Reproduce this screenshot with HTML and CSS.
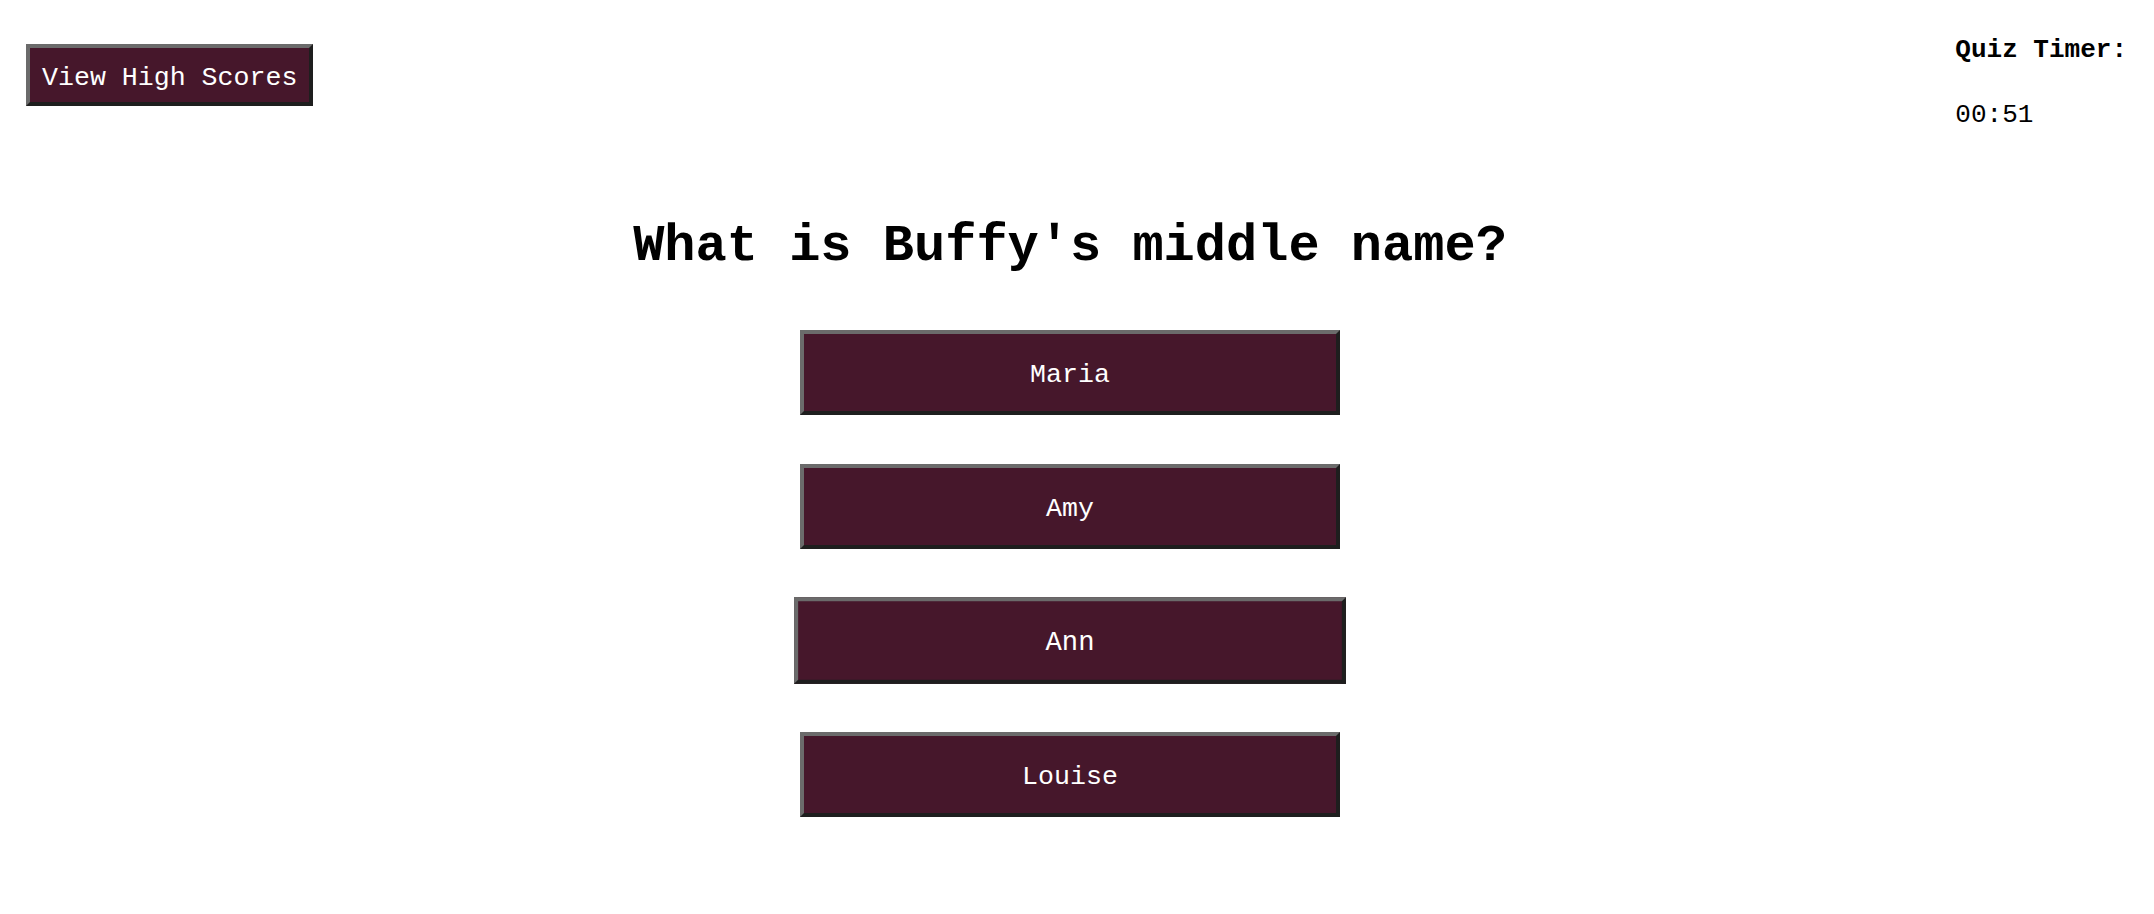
FILE: index.html
```html
<!DOCTYPE html>
<html lang="en">
<head>
<meta charset="utf-8">
<title>Quiz</title>
<link rel="stylesheet" href="styles.css">
</head>
<body>
<header class="top-bar">
  <button class="btn btn-scores">View High Scores</button>
  <div class="timer">
    <p class="timer-label">Quiz Timer:</p>
    <p class="timer-value">00:51</p>
  </div>
</header>
<main class="quiz">
  <h1 class="question">What is Buffy's middle name?</h1>
  <div class="answers">
    <button class="btn btn-answer">Maria</button>
    <button class="btn btn-answer">Amy</button>
    <button class="btn btn-answer is-hover">Ann</button>
    <button class="btn btn-answer">Louise</button>
  </div>
</main>
</body>
</html>
```

FILE: styles.css
```css
html, body {
  margin: 0;
  padding: 0;
  background: #ffffff;
}

body {
  font-family: "Liberation Mono", "Courier New", monospace;
  color: #000000;
  font-size: 26.6px;
  width: 2154px;
  min-height: 914px;
}

.top-bar {
  display: flex;
  justify-content: space-between;
  align-items: flex-start;
  padding: 0 27px 0 26px;
}

.btn {
  font-family: "Liberation Mono", "Courier New", monospace;
  font-size: 26.6px;
  line-height: 30px;
  color: #ffffff;
  background: #46172b;
  border-width: 4px;
  border-style: solid;
  border-color: #6b6b6b #1e1e1e #1e1e1e #6b6b6b;
  cursor: pointer;
  margin: 0;
}

.btn-scores {
  margin-top: 44px;
  padding: 14.5px 12px 9.5px 12px;
}

.timer {
  margin-top: 35px;
  font-size: 26px;
}

.timer p {
  margin: 0;
  line-height: 30px;
}

.timer-label {
  font-weight: bold;
}

.timer-value {
  margin-top: 35px !important;
}

.quiz {
  display: flex;
  flex-direction: column;
  align-items: center;
  padding-right: 14px;
}

.question {
  font-size: 52px;
  line-height: 58px;
  font-weight: bold;
  margin: 88px 0 0 0;
}

.answers {
  display: flex;
  flex-direction: column;
  align-items: center;
  gap: 49px;
  margin-top: 54px;
}

.btn-answer {
  width: 540px;
  padding: 26px 0 21px 0;
  text-align: center;
}

.btn-answer.is-hover {
  transform: scale(1.022, 1.02);
}
```
